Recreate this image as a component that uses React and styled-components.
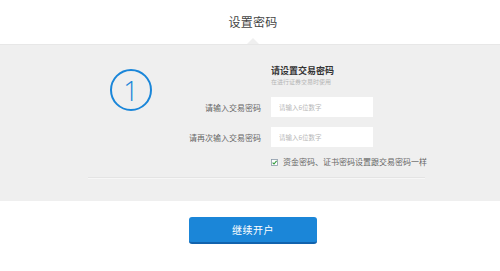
import React from "react";
import styled, { createGlobalStyle } from "styled-components";

const Global = createGlobalStyle`
  html, body { margin: 0; padding: 0; background: #ffffff; }
  body { font-family: "Noto Sans CJK SC", "Noto Sans", sans-serif; color: #333; }
  * { box-sizing: border-box; }
`;

const Page = styled.div`
  width: 500px;
  height: 271px;
  overflow: hidden;
  display: flex;
  flex-direction: column;
`;

const Header = styled.header`
  height: 44px;
  display: flex;
  align-items: center;
  justify-content: center;
  padding: 0 0 1px 6px;
`;

const Title = styled.h1`
  margin: 0;
  font-size: 12px;
  font-weight: 400;
  color: #444;
  letter-spacing: 0.2px;
`;

const Panel = styled.section`
  position: relative;
  height: 157px;
  background: #efefef;
  box-shadow: inset 0 1px 0 #e7e7e7;
  padding-top: 21px;
  display: flex;
  flex-direction: column;
`;

const Notch = styled.span`
  position: absolute;
  top: -6px;
  left: 247px;
  width: 0;
  height: 0;
  border-left: 6px solid transparent;
  border-right: 6px solid transparent;
  border-bottom: 6px solid #efefef;
`;

const Form = styled.div`
  display: grid;
  grid-template-columns: 261px 102px;
  column-gap: 10px;
  align-items: center;
`;

const StepCircle = styled.div`
  grid-column: 1;
  grid-row: 1 / 3;
  align-self: start;
  justify-self: start;
  margin-left: 110px;
  margin-top: 4px;
  width: 42px;
  height: 42px;
  border: 2px solid #1a86d9;
  border-radius: 50%;
  display: flex;
  align-items: center;
  justify-content: center;
  color: #1a86d9;
  font-family: "Open Sans", "Liberation Sans", sans-serif;
  font-weight: 300;
  font-size: 27px;
  line-height: 1;
`;

const Heading = styled.div`
  grid-column: 2;
  grid-row: 1;
  white-space: nowrap;
  display: flex;
  flex-direction: column;
  gap: 1px;
`;

const HeadingTitle = styled.div`
  font-size: 9px;
  line-height: 12px;
  font-weight: 700;
  color: #333;
`;

const HeadingSub = styled.div`
  font-size: 6px;
  line-height: 8px;
  color: #b5b5b5;
`;

const Label = styled.label`
  grid-column: 1;
  grid-row: ${(p) => p.$row};
  justify-self: end;
  font-size: 8px;
  color: #666;
  white-space: nowrap;
  margin-top: ${(p) => p.$top || 0}px;
`;

const Input = styled.input`
  grid-column: 2;
  grid-row: ${(p) => p.$row};
  width: 102px;
  height: 20px;
  border: none;
  outline: none;
  background: #ffffff;
  padding: 0 8px;
  font-family: "Noto Sans CJK SC", "Noto Sans", sans-serif;
  font-size: 6.5px;
  color: #333;
  margin-top: ${(p) => p.$top || 0}px;
  &::placeholder { color: #b8b8b8; }
`;

const CheckRow = styled.div`
  grid-column: 2;
  grid-row: 4;
  margin-top: 10px;
  display: flex;
  align-items: center;
  gap: 5px;
  white-space: nowrap;
  font-size: 8px;
  line-height: 10px;
  color: #666;
`;

const Box = styled.svg`
  width: 7px;
  height: 7px;
  flex: none;
`;

const Divider = styled.hr`
  margin: 10px 75px 0 88px;
  border: none;
  height: 2px;
  border-top: 1px solid #e4e4e4;
  border-bottom: 1px solid #f7f7f7;
`;

const Footer = styled.div`
  display: flex;
  justify-content: center;
  padding: 16px 0 0 6px;
`;

const Button = styled.button`
  width: 128px;
  height: 27px;
  border: none;
  border-bottom: 2px solid #1263ad;
  border-radius: 3px;
  background: #1b86d8;
  color: #ffffff;
  font-family: "Noto Sans CJK SC", "Noto Sans", sans-serif;
  font-size: 10px;
  letter-spacing: 0.5px;
  cursor: pointer;
  padding: 0;
`;

export default function App() {
  return (
    <Page>
      <Global />
      <Header>
        <Title>设置密码</Title>
      </Header>
      <Panel>
        <Notch />
        <Form>
          <StepCircle>1</StepCircle>
          <Heading>
            <HeadingTitle>请设置交易密码</HeadingTitle>
            <HeadingSub>在进行证券交易时使用</HeadingSub>
          </Heading>
          <Label $row={2} $top={11}>请输入交易密码</Label>
          <Input $row={2} $top={11} type="password" placeholder="请输入6位数字" />
          <Label $row={3} $top={10}>请再次输入交易密码</Label>
          <Input $row={3} $top={10} type="password" placeholder="请输入6位数字" />
          <CheckRow>
            <Box viewBox="0 0 7 7">
              <rect x="0.5" y="0.5" width="6" height="6" fill="#fff" stroke="#8a9aa8" strokeWidth="0.8" />
              <path d="M1.6 3.6 L3 5 L5.6 1.9" fill="none" stroke="#2e9a3a" strokeWidth="1.1" />
            </Box>
            资金密码、证书密码设置跟交易密码一样
          </CheckRow>
        </Form>
        <Divider />
      </Panel>
      <Footer>
        <Button>继续开户</Button>
      </Footer>
    </Page>
  );
}
